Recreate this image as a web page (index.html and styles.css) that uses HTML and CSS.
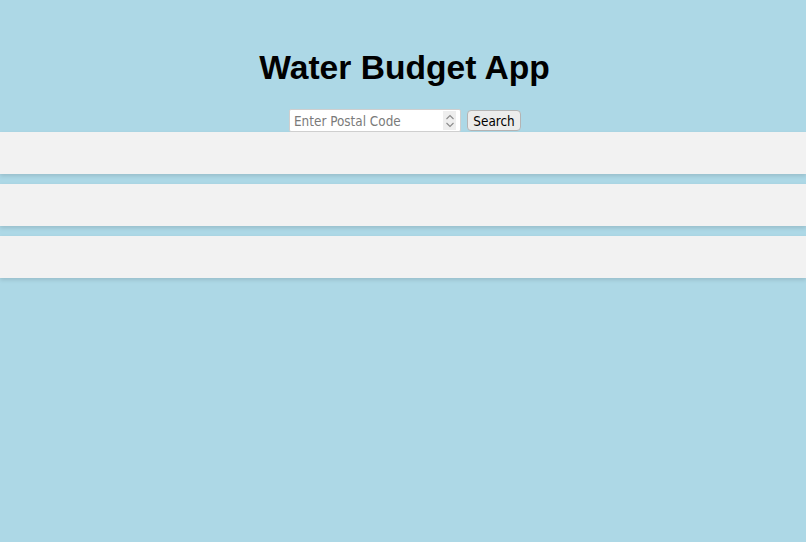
FILE: index.html
```html
<!DOCTYPE html>
<html lang="en">
<head>
<meta charset="utf-8">
<title>Water Budget App</title>
<link rel="stylesheet" href="styles.css">
</head>
<body>
<header class="header">
  <h1 class="title">Water Budget App</h1>
  <form class="search">
    <div class="field">
      <input class="postal" type="text" placeholder="Enter Postal Code">
      <span class="spin" aria-hidden="true">
        <svg width="10" height="16" viewBox="0 0 10 16"><path d="M1.5 6 L5 2.5 L8.5 6" fill="none" stroke="#8a8a8a" stroke-width="1.1"/><path d="M1.5 10 L5 13.5 L8.5 10" fill="none" stroke="#8a8a8a" stroke-width="1.1"/></svg>
      </span>
    </div>
    <button class="btn" type="button">Search</button>
  </form>
</header>
<main class="panels">
  <section class="panel"></section>
  <section class="panel"></section>
  <section class="panel"></section>
</main>
</body>
</html>
```
FILE: styles.css
```css
html, body {
  margin: 0;
  padding: 0;
}
body {
  background: #add8e6;
  font-family: "Liberation Sans", Arial, sans-serif;
  min-height: 542px;
}
.header {
  text-align: center;
  padding-top: 49px;
}
.title {
  margin: 0 0 22px;
  padding-left: 3px;
  font-size: 33.6px;
  line-height: 38px;
  font-weight: bold;
  color: #000;
}
.search {
  display: flex;
  justify-content: center;
  align-items: flex-start;
  gap: 6px;
  height: 23px;
  margin: 0;
  padding-left: 4px;
}
.field {
  position: relative;
  width: 172px;
  height: 23px;
}
.postal {
  box-sizing: border-box;
  width: 172px;
  height: 23px;
  margin: 0;
  padding: 3px 22px 1px 4px;
  border: 1px solid #cfcfcf;
  border-radius: 2px;
  background: #fff;
  font-family: "DejaVu Sans Condensed", "DejaVu Sans", sans-serif;
  font-size: 13.4px;
  color: #000;
  outline: none;
}
.postal::placeholder {
  color: #7a7a7a;
}
.spin {
  position: absolute;
  right: 5px;
  top: 2px;
  width: 13px;
  height: 19px;
  background: #eeeeee;
  display: flex;
  align-items: center;
  justify-content: center;
}
.btn {
  box-sizing: border-box;
  height: 21px;
  width: 54px;
  margin: 1px 0 0;
  padding: 1px 0 0;
  border: 1px solid #b4b4b4;
  border-radius: 4px;
  background: #ececec;
  font-family: "DejaVu Sans Condensed", "DejaVu Sans", sans-serif;
  font-size: 13.4px;
  color: #000;
}
.panels {
  display: flex;
  flex-direction: column;
  gap: 10px;
}
.panel {
  height: 42px;
  background: #f2f2f2;
  box-shadow: 0 2px 4px rgba(0, 0, 0, 0.12);
}
```
